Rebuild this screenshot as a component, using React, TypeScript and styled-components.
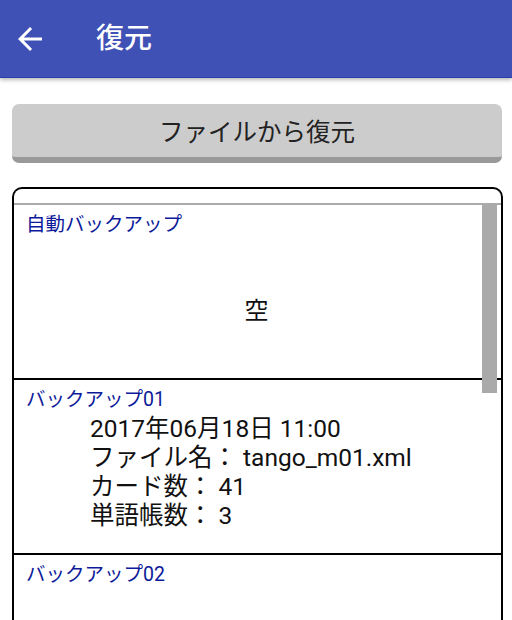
import styled, { createGlobalStyle } from 'styled-components';

const GlobalStyle = createGlobalStyle`
  html, body {
    margin: 0;
    padding: 0;
    background: #ffffff;
    overflow: hidden;
  }
  body {
    font-family: Roboto, "Noto Sans CJK JP", sans-serif;
  }
`;

type Backup = {
  label: string;
  date?: string;
  fileName?: string;
  cards?: number;
  books?: number;
};

const backups: Backup[] = [
  { label: '自動バックアップ' },
  {
    label: 'バックアップ01',
    date: '2017年06月18日 11:00',
    fileName: 'tango_m01.xml',
    cards: 41,
    books: 3,
  },
  { label: 'バックアップ02' },
];

function BackArrow() {
  return (
    <svg width="36" height="36" viewBox="0 0 24 24">
      <path
        fill="#ffffff"
        d="M20 11H7.83l5.59-5.59L12 4l-8 8 8 8 1.41-1.41L7.83 13H20v-2z"
      />
    </svg>
  );
}

export default function App() {
  return (
    <Page>
      <GlobalStyle />
      <Toolbar>
        <BackButton>
          <BackArrow />
        </BackButton>
        <Title>復元</Title>
      </Toolbar>
      <Content>
        <RestoreButton>ファイルから復元</RestoreButton>
        <ListCard>
          <List>
            {backups.map((item, idx) => (
              <Row key={idx}>
                <RowLabel>{item.label}</RowLabel>
                {idx === 0 && (
                  <EmptyBody>
                    <EmptyText>空</EmptyText>
                  </EmptyBody>
                )}
                {item.date && (
                  <Details>
                    <DetailLine>{item.date}</DetailLine>
                    <DetailLine>ファイル名： {item.fileName}</DetailLine>
                    <DetailLine>カード数： {item.cards}</DetailLine>
                    <DetailLine>単語帳数： {item.books}</DetailLine>
                  </Details>
                )}
              </Row>
            ))}
            <ScrollThumb />
          </List>
        </ListCard>
      </Content>
    </Page>
  );
}

const Page = styled.div`
  width: 512px;
  height: 620px;
  overflow: hidden;
  background: #ffffff;
`;

const Toolbar = styled.div`
  height: 77px;
  background: #3f51b5;
  border-bottom: 1px solid #2c3fa8;
  display: flex;
  align-items: center;
  box-shadow: 0 2px 4px rgba(0, 0, 0, 0.28);
  position: relative;
  z-index: 1;
`;

const BackButton = styled.div`
  width: 36px;
  height: 36px;
  margin-left: 12px;
  display: flex;
  align-items: center;
  justify-content: center;
`;

const Title = styled.div`
  margin-left: 48px;
  color: #ffffff;
  font-size: 28px;
  font-weight: 500;
  line-height: 1;
`;

const Content = styled.div`
  padding: 26px 9px 0 12px;
`;

const RestoreButton = styled.div`
  height: 53px;
  margin-right: 1px;
  background: #cccccc;
  border-bottom: 6px solid #999999;
  border-radius: 7px;
  display: flex;
  align-items: center;
  justify-content: center;
  color: #222222;
  font-size: 24.5px;
`;

const ListCard = styled.div`
  margin-top: 24px;
  height: 520px;
  border: 2px solid #000000;
  border-bottom: none;
  border-radius: 10px 10px 0 0;
  padding-top: 14px;
  overflow: hidden;
`;

const List = styled.div`
  position: relative;
  border-top: 2px solid #aaaaaa;
`;

const Row = styled.div`
  height: 175px;
  box-sizing: border-box;
  border-bottom: 2px solid #000000;
  padding: 6px 0 0 12px;
  display: flex;
  flex-direction: column;
`;

const RowLabel = styled.div`
  color: #0d1a9a;
  font-size: 19.5px;
  line-height: 28px;
`;

const EmptyBody = styled.div`
  flex: 1;
  margin-left: -14px;
  display: flex;
  align-items: center;
  justify-content: center;
`;

const EmptyText = styled.div`
  color: #111111;
  font-size: 24px;
`;

const Details = styled.div`
  padding-left: 64px;
  display: flex;
  flex-direction: column;
`;

const DetailLine = styled.div`
  color: #111111;
  font-size: 24.5px;
  line-height: 29px;
`;

const ScrollThumb = styled.div`
  position: absolute;
  top: 0;
  right: 4px;
  width: 15px;
  height: 188px;
  background: #aaaaaa;
`;
